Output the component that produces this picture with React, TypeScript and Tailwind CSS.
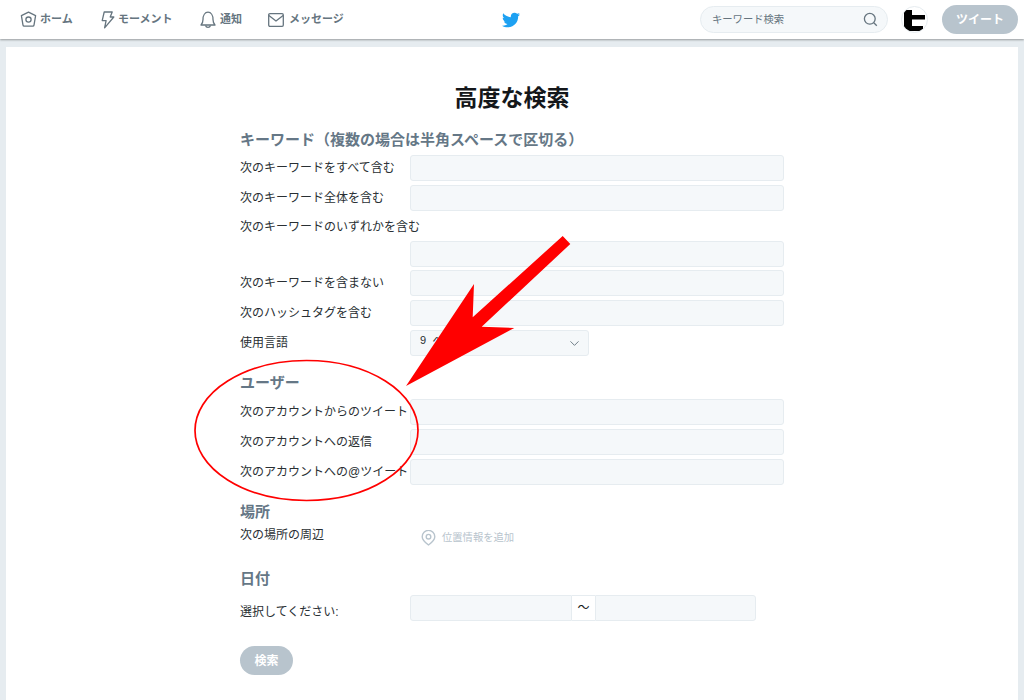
import React from 'react'
import { FaTwitter } from 'react-icons/fa'
import { ChevronDown } from 'lucide-react'

const font = "font-['Liberation_Sans','Noto_Sans_CJK_JP',sans-serif]"

function HomeIcon() {
  return (
    <svg width="17" height="17" viewBox="0 0 17 17" fill="none" stroke="#66757f" strokeWidth="1.3" strokeLinejoin="round">
      <path d="M8.5 1.2 15.6 4.6 14 14.2a1.2 1.2 0 0 1-1.2 1H4.2a1.2 1.2 0 0 1-1.2-1L1.4 4.6Z" />
      <circle cx="8.5" cy="8.6" r="2.6" />
    </svg>
  )
}

function BoltIcon() {
  return (
    <svg width="14" height="18" viewBox="0 0 14 18" fill="none" stroke="#66757f" strokeWidth="1.3" strokeLinejoin="round">
      <path d="M3.2 1h8l-2 5h3.600L3.600 16.800l1.500-7.200H1.200Z" />
    </svg>
  )
}

function BellIcon() {
  return (
    <svg width="16" height="18" viewBox="0 0 16 18" fill="none" stroke="#66757f" strokeWidth="1.3" strokeLinejoin="round">
      <path d="M1 14c1.500-1.400 2-3 2-5.400C3 4.200 5 1.200 8 1.200s5 3 5 7.400c0 2.400.5 4 2 5.400Z" />
      <path d="M5.500 14.500a2.600 2.600 0 0 0 5 0" />
    </svg>
  )
}

function MailIcon() {
  return (
    <svg width="16" height="14" viewBox="0 0 16 14" fill="none" stroke="#66757f" strokeWidth="1.3" strokeLinejoin="round">
      <rect x="0.700" y="0.700" width="14.600" height="12.600" rx="1.200" />
      <path d="M0.900 2.500 8 8l7.100-5.500" />
    </svg>
  )
}

function NavItem({ icon, label, className }: { icon: React.ReactNode; label: string; className: string }) {
  return (
    <div className={`flex items-center ${className}`}>
      {icon}
      <span className="text-[11px] font-bold text-[#66757f]">{label}</span>
    </div>
  )
}

function Row({ label, select }: { label: string; select?: boolean }) {
  return (
    <div className="flex h-[26px] items-center">
      <div className="w-[170px] shrink-0 whitespace-nowrap text-[12px] text-[#292f33]">{label}</div>
      {select ? (
        <div className="flex h-[26px] w-[179px] items-center justify-between rounded-[3px] border border-[#e6ecf0] bg-[#f5f8fa] pl-[9px] pr-[6px]">
          <span className="mb-[7px] whitespace-pre text-[11px] leading-[12px] text-[#292f33]">9  ヘ</span>
          <ChevronDown size={15} color="#66757f" strokeWidth={1.5} />
        </div>
      ) : (
        <div className="h-[26px] w-[374px] rounded-[3px] border border-[#e6ecf0] bg-[#f5f8fa]" />
      )}
    </div>
  )
}

function SectionTitle({ children, className }: { children: React.ReactNode; className: string }) {
  return <h2 className={`text-[15px] font-bold leading-[20px] text-[#657786] ${className}`}>{children}</h2>
}

export default function App() {
  return (
    <div className={`relative h-[700px] w-[1024px] overflow-hidden bg-[#e6ecf0] ${font}`}>
      <nav className="flex h-[39px] items-center bg-white pl-[20px] pr-[6px] shadow-[0_1px_2px_rgba(0,0,0,0.35)]">
        <NavItem icon={<HomeIcon />} label="ホーム" className="w-[81px] gap-[3px]" />
        <NavItem icon={<BoltIcon />} label="モーメント" className="w-[99px] gap-[3px]" />
        <NavItem icon={<BellIcon />} label="通知" className="w-[68px] gap-[4px]" />
        <NavItem icon={<MailIcon />} label="メッセージ" className="w-[234px] gap-[5px]" />
        <FaTwitter size={18} color="#1da1f2" />
        <div className="ml-[180px] flex h-[27px] w-[188px] items-center justify-between rounded-full border border-[#e6ecf0] bg-[#f5f8fa] pl-[11px] pr-[9px]">
          <span className="text-[10.300px] text-[#66757f]">キーワード検索</span>
          <svg width="15" height="15" viewBox="0 0 15 15" fill="none" stroke="#66757f" strokeWidth="1.300">
            <circle cx="6.800" cy="6.800" r="5.400" />
            <path d="m10.800 10.800 3 3" />
          </svg>
        </div>
        <div className="ml-[13px] h-[27px] w-[27px] overflow-hidden rounded-full border border-[#e6ecf0] bg-white">
          <svg width="25" height="25" viewBox="0 0 25 25" fill="#000">
            <path d="M2 3h8v5h13v4.500H10V19h11v5H2Z" />
          </svg>
        </div>
        <button className="ml-[14px] h-[29px] w-[76px] rounded-full bg-[#b8c4cd] text-[12px] font-bold text-white">ツイート</button>
      </nav>

      <main className="mx-[6px] mt-[8px] h-[660px] bg-white pl-[234px]">
        <h1 className="w-[544px] pt-[36px] text-center text-[23px] font-bold leading-[30px] text-[#14171a]">高度な検索</h1>

        <SectionTitle className="mt-[17px]">キーワード（複数の場合は半角スペースで区切る）</SectionTitle>
        <div className="mt-[5px] flex flex-col gap-[4px]">
          <Row label="次のキーワードをすべて含む" />
          <Row label="次のキーワード全体を含む" />
          <div className="h-[24px] text-[12px] leading-[24px] text-[#292f33]">次のキーワードのいずれかを含む</div>
        </div>
        <div className="mt-[2px] flex flex-col gap-[3.400px]">
          <Row label="" />
          <Row label="次のキーワードを含まない" />
          <Row label="次のハッシュタグを含む" />
          <div className="mt-[1px]">
            <Row label="使用言語" select />
          </div>
        </div>

        <SectionTitle className="mt-[17px]">ユーザー</SectionTitle>
        <div className="mt-[6px] flex flex-col gap-[4px]">
          <Row label="次のアカウントからのツイート" />
          <Row label="次のアカウントへの返信" />
          <Row label="次のアカウントへの@ツイート" />
        </div>

        <SectionTitle className="mt-[17px]">場所</SectionTitle>
        <div className="flex h-[26px] items-center">
          <div className="w-[170px] text-[12px] text-[#292f33]">次の場所の周辺</div>
          <div className="ml-[11px] mt-[6px] flex items-center gap-[6px]">
            <svg width="15" height="16" viewBox="0 0 15 16" fill="none" stroke="#b8c4cd" strokeWidth="1.400">
              <path d="M7.500 15C4 12.400 1.200 9.800 1.200 6.700a6.300 6.300 0 0 1 12.600 0c0 3.100-2.800 5.700-6.300 8.300Z" />
              <circle cx="7.500" cy="6.700" r="2.300" />
            </svg>
            <span className="text-[10.300px] text-[#b8c4cd]">位置情報を追加</span>
          </div>
        </div>

        <SectionTitle className="mt-[21px]">日付</SectionTitle>
        <div className="mt-[6px] flex h-[26px] items-center">
          <div className="mt-[8px] w-[170px] text-[12px] text-[#292f33]">選択してください:</div>
          <div className="h-[26px] w-[162px] rounded-l-[3px] border border-[#e6ecf0] bg-[#f5f8fa]" />
          <div className="flex h-[26px] w-[23px] items-center justify-center border-y border-[#e6ecf0] text-[12px] text-[#14171a]">〜</div>
          <div className="h-[26px] w-[161px] rounded-r-[3px] border border-[#e6ecf0] bg-[#f5f8fa]" />
        </div>

        <button className="mt-[25px] h-[29px] w-[53px] rounded-full bg-[#b8c4cd] text-[12px] font-bold text-white">検索</button>
      </main>

      <svg className="absolute left-0 top-0 pointer-events-none" width="1024" height="700" viewBox="0 0 1024 700" fill="none">
        <polygon fill="#ff0000" points="562.700,236 570.300,244 481.700,326.700 514.300,328 406,386 474,284 472.700,317.300" />
        <ellipse cx="306.500" cy="430.500" rx="111.500" ry="70" stroke="#ff0000" strokeWidth="1.700" />
      </svg>
    </div>
  )
}
